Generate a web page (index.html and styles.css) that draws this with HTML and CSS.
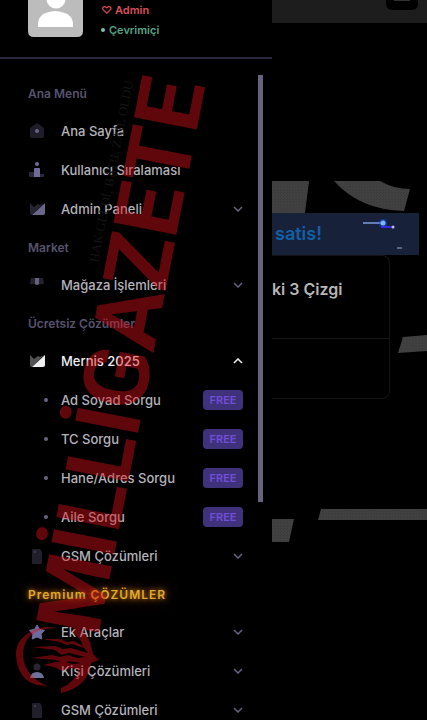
FILE: index.html
```
<!DOCTYPE html>
<html lang="tr">
<head>
  <meta charset="utf-8">
  <meta name="viewport" content="width=device-width, initial-scale=1">
  <title>Panel</title>
  <link rel="stylesheet" href="styles.css">
</head>
<body>
  <svg class="symbols" aria-hidden="true">
    <symbol id="down" viewBox="0 0 10 6"><path d="M1 1l4 4 4-4" fill="none" stroke="currentColor" stroke-width="1.5"/></symbol>
    <symbol id="chart" viewBox="0 0 18 18"><path d="M2 3l4 4 4-3 2 1 4-2L4 15q-2 0-2-2z" fill="currentColor" opacity=".35"/><path d="M17 3v10q0 2-2 2H4z" fill="currentColor"/></symbol>
    <symbol id="phone" viewBox="0 0 18 18"><path d="M4 3q0-1 1-1h7l2 3v11q0 1-1 1H5q-1 0-1-1z" fill="currentColor"/><circle cx="7" cy="5" r="1" fill="#49445e"/></symbol>
  </svg>

  <aside class="sidebar">
    <header class="profile">
      <svg class="avatar" viewBox="0 0 55 37" aria-label="Avatar">
        <path d="M0 0h55v31q0 6-6 6H6q-6 0-6-6z" fill="#bcbcbc"/>
        <circle cx="28" cy="-1" r="9.500" fill="#fff"/>
        <path d="M10 27v-4q1-11 17-12 17 1 18 12v4z" fill="#fff"/>
      </svg>
      <div class="status">
        <div class="role">♡ Admin</div>
        <div class="online">Çevrimiçi</div>
      </div>
    </header>

    <nav class="menu">
      <h2>Ana Menü</h2>
      <a class="item" href="#home">
        <svg class="icon" viewBox="0 0 18 18"><path d="M9 1l7 5v8q0 2-2 2H4q-2 0-2-2V6z" fill="#1f1d28"/><circle cx="9" cy="9" r="2" fill="#69648a"/></svg>
        <span>Ana Sayfa</span>
      </a>
      <a class="item" href="#rank">
        <svg class="icon" viewBox="0 0 18 18"><path d="M1 11h5v5H2q-1 0-1-1zM12 13h4v2q0 1-1 1h-3z" fill="#2b283b"/><path d="M6 8q0-1 1-1h4q1 0 1 1v8H6z" fill="#716b98"/><circle cx="9" cy="3" r="2" fill="#716b98"/></svg>
        <span>Kullanıcı Sıralaması</span>
      </a>
      <button class="item" type="button">
        <svg class="icon"><use href="#chart"/></svg>
        <span>Admin Paneli</span>
        <svg class="arrow"><use href="#down"/></svg>
      </button>

      <h2>Market</h2>
      <button class="item" type="button">
        <svg class="icon" viewBox="0 0 18 18"><path d="M3 2h12l1 5q-1 2-4 1H6q-4 1-4-1z" fill="#24222f"/><path d="M7 2h4v6q-2 2-4 0z" fill="#67627f"/></svg>
        <span>Mağaza İşlemleri</span>
        <svg class="arrow"><use href="#down"/></svg>
      </button>

      <h2>Ücretsiz Çözümler</h2>
      <button class="item open" type="button" aria-expanded="true">
        <svg class="icon"><use href="#chart"/></svg>
        <span>Mernis 2025</span>
        <svg class="arrow"><use href="#down"/></svg>
      </button>
      <a class="item sub" href="#ad"><span>Ad Soyad Sorgu</span><b class="badge">FREE</b></a>
      <a class="item sub" href="#tc"><span>TC Sorgu</span><b class="badge">FREE</b></a>
      <a class="item sub" href="#hane"><span>Hane/Adres Sorgu</span><b class="badge">FREE</b></a>
      <a class="item sub" href="#aile"><span>Aile Sorgu</span><b class="badge">FREE</b></a>
      <button class="item" type="button">
        <svg class="icon dark"><use href="#phone"/></svg>
        <span>GSM Çözümleri</span>
        <svg class="arrow"><use href="#down"/></svg>
      </button>

      <h2 class="premium"><span>Premium ÇÖZÜMLER</span></h2>
      <button class="item" type="button">
        <svg class="icon" viewBox="0 0 18 18"><path d="M9 2l2.500 4.500 5 .8-3.500 3.700.8 5-4.800-2-4.800 2 .8-5-3.500-3.700 5-.8z" fill="#6c6c9e" stroke="#6c6c9e" stroke-linejoin="round"/></svg>
        <span>Ek Araçlar</span>
        <svg class="arrow"><use href="#down"/></svg>
      </button>
      <button class="item" type="button">
        <svg class="icon" viewBox="0 0 18 18"><circle cx="9" cy="5" r="3.500" fill="#292634"/><path d="M2 16q1-6 7-6t7 6z" fill="#6f7298"/></svg>
        <span>Kişi Çözümleri</span>
        <svg class="arrow"><use href="#down"/></svg>
      </button>
      <button class="item" type="button">
        <svg class="icon dark"><use href="#phone"/></svg>
        <span>GSM Çözümleri</span>
        <svg class="arrow"><use href="#down"/></svg>
      </button>
    </nav>
    <div class="thumb"></div>

    <svg class="watermark" viewBox="0 0 272 720">
      <text class="motto" transform="translate(98 263) rotate(-79)">HAK GELDİ, BATIL ZAİL OLDU</text>
      <g class="brand">
        <text transform="translate(98 638) rotate(-79)">MİLLİGAZETE</text>
        <path d="M56 628Q42 625 30 632Q15 641 16 656Q18 680 37 685L48 686Q25 677 23 656Q23 633 45 629z"/>
        <path d="M73 625Q85 629 90 642L93 654 99 660 91 663 90 669Q84 688 61 693V688Q74 683 79 670L71 668 62 671 54 667 43 665 56 662 66 662 72 664 81 663 70 661 63 663 56 660 31 658 52 655 60 657 67 655 78 658 85 657 69 653 62 655 55 650 32 647 55 646 63 649 71 648 88 653 84 648 72 644 66 645 60 642 42 639 60 639 67 642 74 641 83 646Q80 637 74 634z"/>
      </g>
    </svg>
  </aside>

  <main class="page">
    <svg class="backdrop" width="155" height="720" viewBox="0 0 155 720" aria-hidden="true">
      <pattern id="grain" width="3" height="3" patternUnits="userSpaceOnUse"><path d="M0 0h3v3H0z" fill="#414141"/><path d="M0 0h1v1H0zM2 1h1v1H2z" fill="#3a3a3a"/></pattern>
      <g fill="url(#grain)">
        <path d="M0 181h37l-4 32H0zM62 181h46q14 8 30 8l-6 22q-44-1-70-30z"/>
        <path d="M131 337l24-2v16l-29 2zM0 519h22l-5 23H0zM49 509h106v11H46z"/>
      </g>
    </svg>
    <div class="topbar">
      <button type="button" class="toggle" aria-label="Menü"></button>
    </div>
    <div class="banner">
      <span>satis!</span>
      <svg class="spark" width="44" height="32" viewBox="0 0 44 32">
        <path d="M0 6h22" stroke="#7f9de0" stroke-width="1.500"/>
        <path d="M18 10h13" stroke="#3528d8" stroke-width="2"/>
        <circle cx="20" cy="6" r="4" fill="#1848ff" opacity=".5"/>
        <circle cx="20" cy="6" r="2.500" fill="#79b8ff"/>
        <circle cx="30" cy="10" r="1.500" fill="#b8b8ff"/>
        <path d="M34 31h5" stroke="#9cabd0"/>
      </svg>
    </div>
    <section class="card">
      <h1>ki 3 Çizgi</h1>
      <div class="card-body"></div>
    </section>
  </main>
</body>
</html>
```
FILE: styles.css
```
* {
  box-sizing: border-box;
}
body {
  margin: 0;
  display: flex;
  height: 100vh;
  overflow: hidden;
  background: #000;
  color: #b4b3bb;
  font-family: Inter, "Liberation Sans", sans-serif;
  font-size: 13px;
}
.symbols {
  position: absolute;
  width: 0;
  height: 0;
}

/* sidebar */
.sidebar {
  position: relative;
  flex: 0 0 272px;
  overflow: hidden;
}
.profile {
  display: flex;
  gap: 18px;
  padding: 0 28px 17px;
  border-bottom: 2px solid #2b283c;
}
.avatar {
  width: 55px;
  height: 37px;
}
.status {
  font-size: 11px;
  font-weight: 600;
  line-height: 20px;
}
.role {
  color: #d94f5c;
}
.online {
  display: flex;
  align-items: center;
  gap: 4px;
  color: #57a488;
}
.online::before {
  content: "";
  width: 4px;
  height: 4px;
  border-radius: 50%;
  background: #7fc0a8;
}
.menu {
  padding-top: 16px;
}
.menu h2 {
  margin: 0;
  padding-left: 28px;
  color: #57536f;
  font-size: 12px;
  font-weight: 600;
  line-height: 37px;
}
.item {
  display: flex;
  align-items: center;
  width: 100%;
  height: 39px;
  padding: 0 29px 2px 28px;
  border: 0;
  background: none;
  color: #b4b3bb;
  font: inherit;
  font-weight: 500;
  text-align: left;
  text-decoration: none;
}
.item span {
  flex: 1;
}
.icon {
  width: 18px;
  height: 18px;
  margin-right: 15px;
  color: #6b668c;
}
.dark {
  color: #211f2b;
}
.arrow {
  width: 10px;
  height: 6px;
  color: #67637f;
}
.open,
.open .icon,
.open .arrow {
  color: #efeff2;
}
.open .arrow {
  transform: rotate(180deg);
}
.sub::before {
  content: "";
  width: 4px;
  height: 4px;
  margin: 0 13px 0 16px;
  border-radius: 50%;
  background: #69667c;
}
.badge {
  width: 40px;
  border-radius: 4px;
  background: #40327a;
  color: #704ed8;
  font-size: 11px;
  font-weight: 600;
  line-height: 20px;
  text-align: center;
}
.menu .premium {
  letter-spacing: 1px;
  color: #e0a92c;
  font-weight: 600;
  text-shadow: 0 0 4px #b06a00, 0 0 10px #8a5200, 0 0 18px #6a4800;
}
.thumb {
  position: absolute;
  top: 75px;
  right: 9px;
  width: 5px;
  height: 427px;
  background: #67637f;
}
.watermark {
  position: absolute;
  top: 0;
  left: 0;
  width: 272px;
  height: 720px;
  pointer-events: none;
}
.brand {
  fill: #d81019;
  opacity: .44;
  font-family: Roboto, "Liberation Sans", sans-serif;
  font-size: 90px;
  font-weight: 700;
}
.motto {
  fill: #131315;
  font-family: "Liberation Serif", serif;
  font-size: 13px;
}

/* page behind the menu */
.page {
  position: relative;
  flex: 1;
  min-width: 0;
}
.backdrop {
  position: absolute;
  top: 0;
  left: 0;
}
.topbar {
  display: flex;
  justify-content: flex-end;
  align-items: flex-start;
  height: 23px;
  padding-right: 9px;
  background: #1d1d1d;
}
.toggle {
  width: 32px;
  height: 10px;
  padding: 0;
  border: 0;
  border-radius: 0 0 6px 6px;
  background: #000 linear-gradient(#333, #333) center top / 16px 1px no-repeat;
}
.banner {
  position: relative;
  margin: 190px 8px 0 0;
  padding-left: 3px;
  background: #18213a;
  color: #145fa5;
  font-size: 18px;
  font-weight: 600;
  line-height: 42px;
}
.spark {
  position: absolute;
  top: 4px;
  right: 12px;
}
.card {
  position: relative;
  margin-right: 37px;
  border: 1px solid #141416;
  border-left: 0;
  border-radius: 0 8px 8px 0;
}
.card h1 {
  margin: 0;
  height: 83px;
  padding-top: 21px;
  border-bottom: 1px solid #18181a;
  color: #b6b6b6;
  font-size: 16px;
  font-weight: 600;
  line-height: 24px;
}
.card-body {
  height: 59px;
}
```
